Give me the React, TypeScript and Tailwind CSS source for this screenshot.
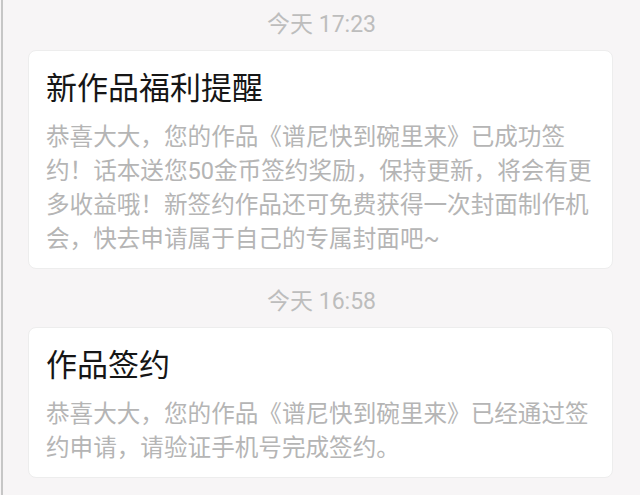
import React from "react";

type Notice = {
  time: string;
  title: string;
  body: string;
};

const notices: Notice[] = [
  {
    time: "今天 17:23",
    title: "新作品福利提醒",
    body: "恭喜大大，您的作品《谱尼快到碗里来》已成功签约！话本送您50金币签约奖励，保持更新，将会有更多收益哦！新签约作品还可免费获得一次封面制作机会，快去申请属于自己的专属封面吧~",
  },
  {
    time: "今天 16:58",
    title: "作品签约",
    body: "恭喜大大，您的作品《谱尼快到碗里来》已经通过签约申请，请验证手机号完成签约。",
  },
];

function NoticeCard({ notice }: { notice: Notice }) {
  return (
    <div>
      <div className="py-[13px] text-center text-[23px] leading-6 text-[#bdbdbd]">
        {notice.time}
      </div>
      <div className="ml-[25px] mr-[27px] rounded-lg border border-[#ededed] bg-white pl-[17px] pr-[12px] pt-[20px] pb-[12px]">
        <h3 className="text-[31px] leading-9 text-[#161616]">{notice.title}</h3>
        <p className="mt-[13px] text-[23.6px] leading-[34px] text-[#b5b5b5]">
          {notice.body}
        </p>
      </div>
    </div>
  );
}

export default function App() {
  return (
    <div
      className="min-h-screen bg-[#f7f5f6] pl-px"
      style={{ fontFamily: "Roboto, 'Noto Sans CJK SC', sans-serif" }}
    >
      <div className="flex min-h-screen flex-col gap-[8px] border-l-2 border-[#c6c6c6]">
        {notices.map((n) => (
          <NoticeCard key={n.time} notice={n} />
        ))}
      </div>
    </div>
  );
}
